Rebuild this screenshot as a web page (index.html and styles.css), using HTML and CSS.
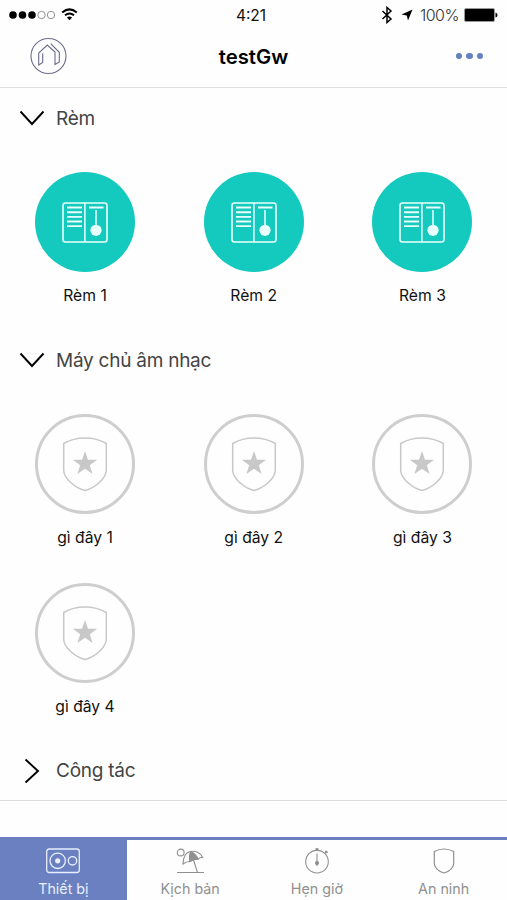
FILE: index.html
```
<!DOCTYPE html>
<html lang="vi">
<head>
    <meta charset="UTF-8">
    <meta name="viewport" content="width=device-width, initial-scale=1.0">
    <title>testGw</title>
    <link rel="stylesheet" href="styles.css">
</head>
<body>
    <!-- Shared icons -->
    <svg class="sprite" xmlns="http://www.w3.org/2000/svg">
        <symbol id="icon-curtain" viewBox="0 0 46 41">
            <rect x="1" y="1" width="44" height="39" rx="2.5" fill="none" stroke="currentColor" stroke-width="1.6"/>
            <path d="M22.9 1v39M34 8v20" fill="none" stroke="currentColor" stroke-width="1.5"/>
            <path d="M5 5.5h15M5 10.2h15M5 14.9h15M5 19.5h15M5 24.1h15M27 5.5h14.5" fill="none" stroke="currentColor" stroke-width="1.9"/>
            <circle cx="34" cy="28.3" r="5.6" fill="currentColor"/>
        </symbol>
        <symbol id="icon-shield-star" viewBox="0 0 46 56">
            <path d="M1.7 7.5Q11 2 23 2t21.300 5.500V34c0 8.500-11.500 18-21.300 20.500C13.200 52 1.700 42.500 1.700 34z" fill="none" stroke="currentColor" stroke-width="1.500"/>
            <path d="M23 15l3 8.700h9.200l-7.400 5.500 2.800 8.900L23 32.700l-7.600 5.400 2.800-8.900-7.400-5.500H20z" fill="currentColor"/>
        </symbol>
        <symbol id="icon-arrow" viewBox="0 0 26 16">
            <path d="M1.500 1.500L13 14 24.500 1.500" fill="none" stroke="currentColor" stroke-width="1.900"/>
        </symbol>
    </svg>

    <div class="app">
        <!-- Status bar -->
        <div class="status-bar">
            <div class="status-left">
                <svg width="72" height="18" viewBox="0 0 72 18">
                    <g fill="#000">
                        <circle cx="5" cy="9" r="3.800"/>
                        <circle cx="14.500" cy="9" r="3.800"/>
                        <circle cx="24" cy="9" r="3.800"/>
                    </g>
                    <g fill="none" stroke="#777" stroke-width="0.800">
                        <circle cx="33.500" cy="9" r="3.700"/>
                        <circle cx="43" cy="9" r="3.700"/>
                    </g>
                    <g fill="none" stroke="#000" stroke-width="2">
                        <path d="M54.200 6.400Q61.500 0.400 68.800 6.400"/>
                        <path d="M57 9.300q4.500-3.500 9 0"/>
                    </g>
                    <path d="M58.900 11.500q2.600-1.800 5.200 0L61.500 14.300z"/>
                </svg>
            </div>
            <div class="status-time">4:21</div>
            <div class="status-right">
                <svg class="bluetooth" width="12" height="18" viewBox="0 0 12 18">
                    <path d="M1.500 5l8.500 8L6 16.500V1.500L10 5l-8.500 8" fill="none" stroke="#000" stroke-width="1.500"/>
                </svg>
                <svg class="location" width="12" height="12" viewBox="0 0 12 12">
                    <path d="M11.500 0.500L7 11.500 5.800 6.500 0.500 5.500z"/>
                </svg>
                <span>100%</span>
                <svg class="battery" width="34" height="14" viewBox="0 0 34 14">
                    <rect x="0.500" y="0.500" width="30" height="13" rx="1.500" fill="#000" stroke="#999"/>
                    <path d="M31.500 4.500q2 0.500 2 2.500t-2 2.500z"/>
                </svg>
            </div>
        </div>

        <!-- Title bar -->
        <div class="nav-bar">
            <svg class="logo" width="38" height="38" viewBox="0 0 38 38" fill="none" stroke="#6b6b8c" stroke-width="1.100">
                <circle cx="19.500" cy="19" r="17.500"/>
                <path d="M13.700 16.300v9.200l-4 2.500V16l8.600-8 7.700 7v12.500l4.300-2.500V15.300l-8.600-8.600"/>
            </svg>
            <h1>testGw</h1>
            <div class="more">
                <span></span><span></span><span></span>
            </div>
        </div>

        <!-- Device groups -->
        <div class="group">
            <div class="group-title">
                <svg class="arrow"><use href="#icon-arrow"/></svg>
                <h2>Rèm</h2>
            </div>
            <div class="devices">
                <div class="device on">
                    <div class="circle"><svg class="curtain"><use href="#icon-curtain"/></svg></div>
                    <p>Rèm 1</p>
                </div>
                <div class="device on">
                    <div class="circle"><svg class="curtain"><use href="#icon-curtain"/></svg></div>
                    <p>Rèm 2</p>
                </div>
                <div class="device on">
                    <div class="circle"><svg class="curtain"><use href="#icon-curtain"/></svg></div>
                    <p>Rèm 3</p>
                </div>
            </div>
        </div>

        <div class="group">
            <div class="group-title">
                <svg class="arrow"><use href="#icon-arrow"/></svg>
                <h2>Máy chủ âm nhạc</h2>
            </div>
            <div class="devices">
                <div class="device">
                    <div class="circle"><svg class="shield"><use href="#icon-shield-star"/></svg></div>
                    <p>gì đây 1</p>
                </div>
                <div class="device">
                    <div class="circle"><svg class="shield"><use href="#icon-shield-star"/></svg></div>
                    <p>gì đây 2</p>
                </div>
                <div class="device">
                    <div class="circle"><svg class="shield"><use href="#icon-shield-star"/></svg></div>
                    <p>gì đây 3</p>
                </div>
                <div class="device">
                    <div class="circle"><svg class="shield"><use href="#icon-shield-star"/></svg></div>
                    <p>gì đây 4</p>
                </div>
            </div>
        </div>

        <div class="group closed">
            <div class="group-title">
                <svg class="arrow"><use href="#icon-arrow"/></svg>
                <h2>Công tác</h2>
            </div>
        </div>

        <!-- Bottom tabs -->
        <div class="tab-bar">
            <div class="tab active">
                <svg width="36" height="28" viewBox="0 0 36 28" fill="none" stroke="currentColor" stroke-width="1.300">
                    <rect x="1.700" y="2" width="32.600" height="23.500" rx="2.500"/>
                    <circle cx="12.700" cy="13.800" r="7.700"/>
                    <circle cx="12.700" cy="13.800" r="2.600" fill="currentColor" stroke="none"/>
                    <circle cx="27.500" cy="13.800" r="4.200"/>
                </svg>
                <span>Thiết bị</span>
            </div>
            <div class="tab">
                <svg width="36" height="28" viewBox="0 0 36 28" fill="none" stroke="currentColor" stroke-width="1.100">
                    <circle cx="8.700" cy="5.500" r="3.400"/>
                    <path d="M5 25.500h27M21.500 13l4 12.500"/>
                    <path d="M11 17C11 10 14 5 18.500 4.500 24 3.500 29 6 30.700 10.500q-2-.5-4.500 1.500-2.500-.5-8.500 2.500-3.500 0-6.700 2.500z"/>
                    <path d="M18.500 4.500c-1.200 3-1.500 6-.8 10q4-2.500 8.500-2.500C24.500 8.500 22 6 18.500 4.500z" fill="currentColor"/>
                </svg>
                <span>Kịch bản</span>
            </div>
            <div class="tab">
                <svg width="36" height="28" viewBox="0 0 36 28" fill="none" stroke="currentColor" stroke-width="1.100">
                    <circle cx="18" cy="14.700" r="11.300"/>
                    <path d="M18 6.500V19M18 1.500v2M26 6.500l1.500-2"/>
                    <path d="M16.500 2.300h3M26.300 4l2.200 1.700" stroke-width="2"/>
                    <circle cx="18" cy="16" r="1.500" fill="currentColor"/>
                </svg>
                <span>Hẹn giờ</span>
            </div>
            <div class="tab">
                <svg width="36" height="28" viewBox="0 0 36 28" fill="none" stroke="currentColor" stroke-width="1.200">
                    <path d="M8.300 4.500Q13 2 18 2t9.700 2.500V16c0 5-5 8.500-9.700 10-4.700-1.500-9.700-5-9.700-10z"/>
                </svg>
                <span>An ninh</span>
            </div>
        </div>
    </div>
</body>
</html>
```
FILE: styles.css
```
* {
    box-sizing: border-box;
}
body {
    margin: 0;
    background: #fefefe;
    color: #111;
    font-family: Inter, "Noto Sans", sans-serif;
}
h1, h2, p {
    margin: 0;
}
.sprite {
    display: none;
}
.app {
    display: flex;
    flex-direction: column;
    height: 900px;
    overflow: hidden;
}

/* Status bar */
.status-bar {
    display: grid;
    grid-template-columns: 1fr auto 1fr;
    align-items: center;
    height: 30px;
    padding: 0 9px 0 8px;
    font-size: 15.5px;
}
.status-left, .status-right {
    display: flex;
    align-items: center;
}
.status-time {
    padding-right: 4px;
}
.status-right {
    justify-content: flex-end;
    font-size: 16px;
    font-weight: 300;
    letter-spacing: -0.5px;
    color: #333;
}
.bluetooth {
    margin-right: 8px;
}
.location {
    margin-right: 7px;
}
.battery {
    margin-left: 5px;
}

/* Title bar */
.nav-bar {
    display: grid;
    grid-template-columns: 1fr auto 1fr;
    align-items: center;
    height: 58px;
    padding: 0 24px 5px;
    border-bottom: 1px solid #dfdfdf;
}
.logo {
    margin-left: 5px;
}
h1 {
    padding-top: 1px;
    font-size: 20.3px;
    font-weight: 600;
    color: #000;
}
.more {
    display: flex;
    justify-content: flex-end;
    gap: 4px;
}
.more span {
    width: 6.5px;
    height: 6.5px;
    border-radius: 50%;
    background: #6680c0;
}

/* Device groups */
.group-title {
    display: flex;
    align-items: center;
    height: 60px;
    padding-left: 19px;
}
.arrow {
    width: 26px;
    height: 16px;
    margin-right: 11px;
    color: #000;
}
.closed .arrow {
    transform: rotate(-90deg);
}
h2 {
    font-size: 19px;
    font-weight: 400;
    letter-spacing: -0.25px;
    color: #444;
}
.devices {
    display: grid;
    grid-template-columns: repeat(3, 168.7px);
    grid-auto-rows: 168.5px;
    padding: 0 0 13.5px 0.7px;
}
.device {
    display: flex;
    flex-direction: column;
    align-items: center;
    padding-top: 24px;
}
.circle {
    display: flex;
    align-items: center;
    justify-content: center;
    width: 100px;
    height: 100px;
    border: 3px solid #cecece;
    border-radius: 50%;
    color: #c8c8c8;
}
.on .circle {
    border: none;
    background: #14c9be;
    color: #e9fffd;
}
.curtain {
    width: 46px;
    height: 41px;
}
.shield {
    width: 46px;
    height: 56px;
}
.device p {
    margin-top: 14px;
    font-size: 15.7px;
    line-height: 20px;
}
.closed {
    height: 60px;
    border-bottom: 1px solid #dcdcdc;
}

/* Bottom tabs */
.tab-bar {
    display: grid;
    grid-template-columns: repeat(4, 1fr);
    height: 63px;
    margin-top: auto;
    border-top: 3px solid #6a80c0;
}
.tab {
    display: flex;
    flex-direction: column;
    align-items: center;
    padding-top: 7px;
    font-size: 14.3px;
    line-height: 18px;
    color: #909090;
}
.tab span {
    margin-top: 5px;
}
.tab.active {
    background: #6a80c0;
    color: #e8eeff;
}
```
